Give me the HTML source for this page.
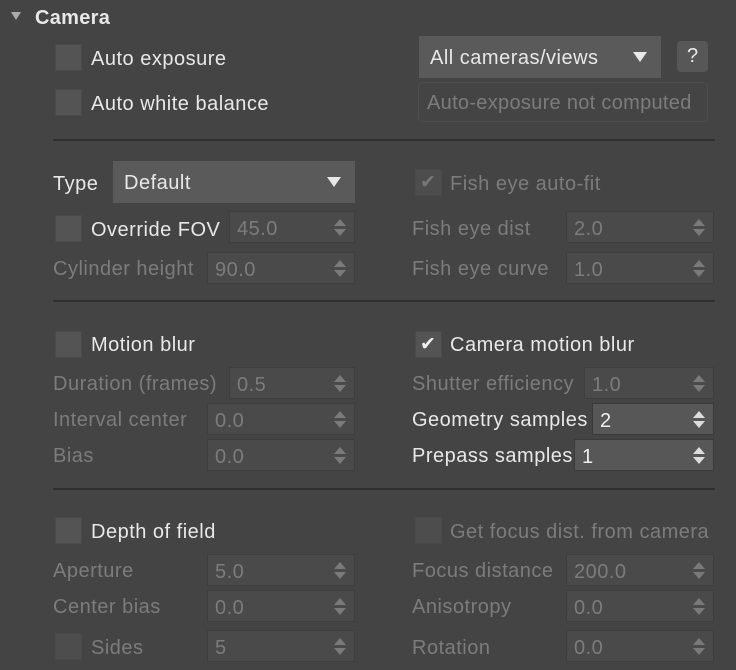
<!DOCTYPE html><html><head><style>
body{margin:0;width:736px;height:670px;background:#444;font-family:"Liberation Sans",sans-serif;font-size:20px;letter-spacing:0.5px;color:#e8e8e8;position:relative;overflow:hidden}
.a{position:absolute;white-space:nowrap;line-height:24px;margin-top:1px}
.d{color:#7c7c7c}
.cb{position:absolute;background:#545454;border:1px solid #4a4a4a;box-sizing:border-box;width:27px;height:27px}
.cb.x{background:#4d4d4d}
.ck{position:absolute;left:4px;top:1px;font-size:19px;line-height:24px;color:#eee}
.x .ck{color:#777}
.sp{position:absolute;height:32px;background:#4a4a4a;border:1px solid #3e3e3e;box-sizing:border-box;color:#7c7c7c;padding-left:7px;line-height:34px}
.sp.e{background:#575757;border-color:#3a3a3a;color:#f0f0f0}
.sp:after{content:"";position:absolute;right:8px;top:7px;border:6px solid transparent;border-bottom:7px solid #7a7a7a;border-top:0}
.sp:before{content:"";position:absolute;right:8px;top:17px;border:6px solid transparent;border-top:7px solid #7a7a7a;border-bottom:0}
.sp.e:after{border-bottom-color:#ddd}.sp.e:before{border-top-color:#ddd}
.sep{position:absolute;left:53px;width:662px;height:2px;background:#2f2f2f}
.dd{position:absolute;height:42px;background:#5a5a5a;line-height:44px;padding-left:11px;box-sizing:border-box}
.dd:after{content:"";position:absolute;right:14px;top:16px;border:7px solid transparent;border-top:10px solid #e8e8e8;border-bottom:0}
</style></head><body>
<div style="position:absolute;left:11px;top:12px;border:5px solid transparent;border-top:8px solid #aaa;border-bottom:0"></div>
<div class="a" style="left:35px;top:5px;font-weight:bold;font-size:20px;letter-spacing:0.3px">Camera</div>

<div class="cb" style="left:55px;top:44px"></div><div class="a" style="left:91px;top:46px">Auto exposure</div>
<div class="cb" style="left:55px;top:89px"></div><div class="a" style="left:91px;top:91px">Auto white balance</div>
<div class="dd" style="left:419px;top:36px;width:242px">All cameras/views</div>
<div class="a" style="left:677px;top:40px;width:31px;height:31px;background:#575757;border-radius:4px;text-align:center;line-height:31px;letter-spacing:0">?</div>
<div class="a d" style="left:418px;top:81px;width:290px;height:40px;border:1px solid #4e4e4e;border-radius:5px;box-sizing:border-box;line-height:40px;padding-left:8px;letter-spacing:0.3px">Auto-exposure not computed</div>
<div class="sep" style="top:139px"></div>

<div class="a" style="left:53px;top:171px">Type</div>
<div class="dd" style="left:113px;top:161px;width:242px">Default</div>
<div class="cb x" style="left:415px;top:169px"><span class="ck">✔</span></div><div class="a d" style="left:450px;top:171px">Fish eye auto-fit</div>
<div class="cb" style="left:55px;top:215px"></div><div class="a" style="left:91px;top:217px">Override FOV</div>
<div class="sp" style="left:229px;top:211px;width:126px">45.0</div>
<div class="a d" style="left:412px;top:216px">Fish eye dist</div><div class="sp" style="left:566px;top:211px;width:148px">2.0</div>
<div class="a d" style="left:53px;top:256px">Cylinder height</div><div class="sp" style="left:207px;top:252px;width:148px">90.0</div>
<div class="a d" style="left:412px;top:256px">Fish eye curve</div><div class="sp" style="left:566px;top:252px;width:148px">1.0</div>
<div class="sep" style="top:300px"></div>

<div class="cb" style="left:55px;top:331px"></div><div class="a" style="left:91px;top:332px">Motion blur</div>
<div class="cb" style="left:415px;top:331px"><span class="ck">✔</span></div><div class="a" style="left:450px;top:332px">Camera motion blur</div>
<div class="a d" style="left:53px;top:371px">Duration (frames)</div><div class="sp" style="left:229px;top:367px;width:126px">0.5</div>
<div class="a d" style="left:412px;top:371px">Shutter efficiency</div><div class="sp" style="left:584px;top:367px;width:130px">1.0</div>
<div class="a d" style="left:53px;top:407px">Interval center</div><div class="sp" style="left:207px;top:403px;width:148px">0.0</div>
<div class="a" style="left:412px;top:407px">Geometry samples</div><div class="sp e" style="left:592px;top:403px;width:122px">2</div>
<div class="a d" style="left:53px;top:443px">Bias</div><div class="sp" style="left:207px;top:439px;width:148px">0.0</div>
<div class="a" style="left:412px;top:443px">Prepass samples</div><div class="sp e" style="left:574px;top:439px;width:140px">1</div>
<div class="sep" style="top:488px"></div>

<div class="cb" style="left:55px;top:517px"></div><div class="a" style="left:91px;top:519px">Depth of field</div>
<div class="cb x" style="left:415px;top:517px"></div><div class="a d" style="left:450px;top:519px">Get focus dist. from camera</div>
<div class="a d" style="left:53px;top:558px">Aperture</div><div class="sp" style="left:207px;top:554px;width:148px">5.0</div>
<div class="a d" style="left:412px;top:558px">Focus distance</div><div class="sp" style="left:566px;top:554px;width:148px">200.0</div>
<div class="a d" style="left:53px;top:594px">Center bias</div><div class="sp" style="left:207px;top:590px;width:148px">0.0</div>
<div class="a d" style="left:412px;top:594px">Anisotropy</div><div class="sp" style="left:566px;top:590px;width:148px">0.0</div>
<div class="cb x" style="left:55px;top:633px"></div><div class="a d" style="left:91px;top:635px">Sides</div><div class="sp" style="left:207px;top:630px;width:148px">5</div>
<div class="a d" style="left:412px;top:635px">Rotation</div><div class="sp" style="left:566px;top:630px;width:148px">0.0</div>
</body></html>
